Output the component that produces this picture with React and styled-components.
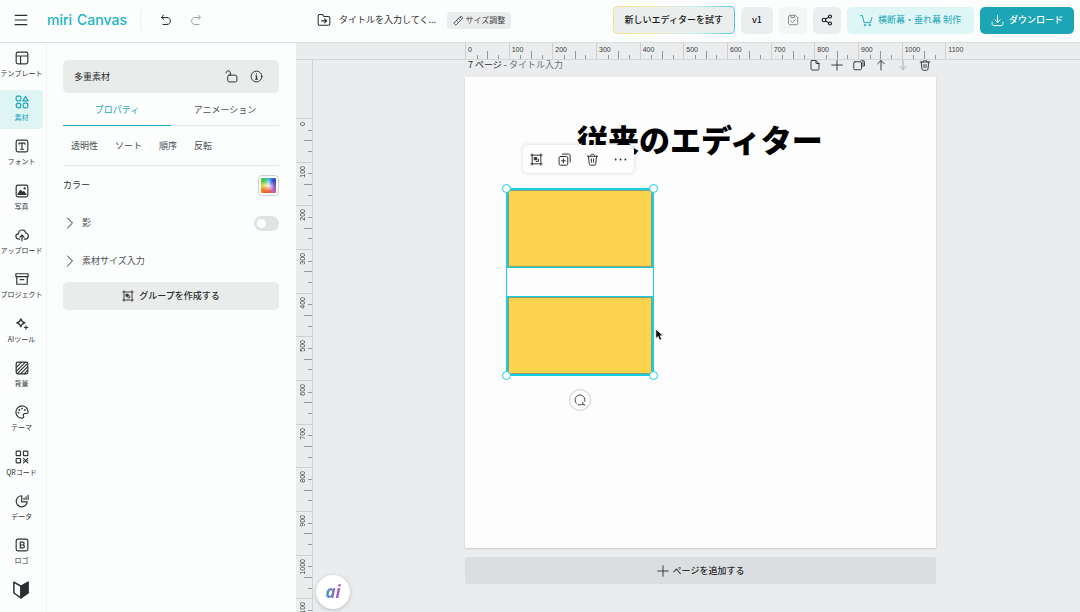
import React, { useState } from 'react';
import styled, { createGlobalStyle, ThemeProvider } from 'styled-components';

const theme = {
  teal: '#1ba5b5',
  cyan: '#16cfe3',
  text: '#2a2d2f',
  muted: '#4b4f52',
  surface: '#fcfdfd',
  soft: '#e9eceb',
  canvas: '#ebecee',
  line: '#e4e6e7'
};

const range = n => Array.from({ length: n }, (_, i) => i);

/* ---------- icons ---------- */

const Svg = styled.svg`
  display: block;
  flex: none;
  fill: none;
  height: ${props => props.$size || 14}px;
  stroke: currentColor;
  stroke-linecap: round;
  stroke-linejoin: round;
  stroke-width: ${props => props.$stroke || 1.8};
  width: ${props => props.$size || 14}px;
`;

const shapes = {
  menu: <path d="M2 4h20M2 12h20M2 20h20" />,
  undo: <path d="M7 2 3 7l5 4M3.500 7H14c9 0 9 14 0 14H6" />,
  redo: <path d="m17 2 4 5-5 4M20.500 7H10c-9 0-9 14 0 14h8" />,
  folder: <path d="M2 5c0-1.500 1-2.500 2.500-2.500H9L12 6h7.500C21 6 22 7 22 8.500v10c0 1.500-1 2.500-2.500 2.500h-15C3 21 2 20 2 18.500zM8 13.500h8M13 10l3.500 3.500L13 17" />,
  ruler: <path d="m3 16.500 13-13c1-1 2-1 3 0l1.500 1.500c1 1 1 2 0 3l-13 13c-1 1-2 1-3 0L3 19.500c-1-1-1-2 0-3zM8 12l3 3M12 8l2 2M15.500 5l2 2" />,
  save: (
    <>
      <path d="M3 5c0-1.500 1-2.500 2.500-2.500H17L21.500 7v12c0 1.500-1 2.500-2.500 2.500H5.500C4 21.500 3 20.500 3 19zM7.500 3v4H15V3" />
      <path d="m8 14 3 3 5.500-5.500" />
    </>
  ),
  share: (
    <>
      <circle cx="6" cy="12" r="3.600" />
      <circle cx="18" cy="5" r="3" />
      <circle cx="18" cy="19" r="3" />
      <path d="m9 10 6.500-3.500M9 14l6.500 3.500" />
    </>
  ),
  cart: (
    <>
      <path d="M1 3h3.500l3 13h12L22 6.500" />
      <circle cx="9" cy="20.500" r="1.300" />
      <circle cx="18" cy="20.500" r="1.300" />
    </>
  ),
  download: <path d="M12 2v13M7 10.500l5 5 5-5M2 15v3c0 2 1 3.500 3.500 3.500h13c2.500 0 3.500-1.500 3.500-3.500v-3" />,
  template: <path d="M5 2h14c2 0 3 1 3 3v14c0 2-1 3-3 3H5c-2 0-3-1-3-3V5c0-2 1-3 3-3zM2 8.500h20M9.500 8.500V22" />,
  elements: (
    <>
      <rect x="2" y="2" width="8" height="8" rx="2" />
      <path d="M18 2.500 22.500 10h-9z" />
      <circle cx="6" cy="18" r="4" />
      <rect x="14" y="14" width="8" height="8" rx="2" />
    </>
  ),
  text: (
    <>
      <rect x="2" y="2" width="20" height="20" rx="3" />
      <path d="M7 9V7h10v2M12 7v10M9.500 17.500h5" />
    </>
  ),
  photo: (
    <>
      <rect x="2" y="2" width="20" height="20" rx="3" />
      <path d="m5 18 4.500-7 3.500 4 2-2 4 5z" fill="currentColor" />
      <circle cx="16.500" cy="7.500" r="1" fill="currentColor" />
    </>
  ),
  upload: <path d="M8 19H6C0 18 0 10 6 10c0-8 11-9 12.500-1.500C25 10 24 19 17.500 19H16M12 22V12M8.500 15.500 12 12l3.500 3.500" />,
  archive: <path d="M1.500 3h21v5h-21zM3 8v13h18V8M9 13h6" />,
  sparkle: (
    <>
      <path d="M10 3c1 4.500 2.500 6 7 7-4.500 1-6 2.500-7 7-1-4.500-2.500-6-7-7 4.500-1 6-2.500 7-7z" />
      <path d="M19 15v6M16 18h6" />
    </>
  ),
  stripes: (
    <>
      <rect x="2" y="2" width="20" height="20" rx="3" />
      <path d="M2.500 11 11 2.500M2.500 17.500l15-15M4 21.500 21.500 4M10 21.500 21.500 10M16 21.500l5.500-5.500" />
    </>
  ),
  palette: (
    <>
      <path d="M22.500 12C22 5.500 17.500 1.500 12 1.500S1.500 6 1.500 12 6 22.500 12 22.500c3 0 3.500-2 2.500-4s0-4 2.500-4h3c1.500 0 2.500-1 2.500-2.500z" />
      <path d="M6 13v.1M7.500 8.500v.1M12 6v.1M17 8.500v.1" strokeWidth="3" />
    </>
  ),
  qr: (
    <>
      <rect x="2" y="2" width="7.500" height="7.500" rx="1" />
      <rect x="14.500" y="2" width="7.500" height="7.500" rx="1" />
      <rect x="2" y="14.500" width="7.500" height="7.500" rx="1" />
      <path d="m14.500 14.500 7.500 7.500M22 14.500 14.500 22M14.500 18v.1M22 18v.1" />
    </>
  ),
  data: (
    <>
      <path d="M11.500 3A9.500 9.500 0 1 0 21 13.500h-9.500z" />
      <path d="M15.500 9.500V7M19 9.500V5M22.500 9.500V2" />
    </>
  ),
  brand: (
    <>
      <rect x="2" y="2" width="20" height="20" rx="3" />
      <path d="M9 7h4c3.500 0 3.500 5 0 5H9zm0 5h4.500c3.500 0 3.500 5 0 5H9z" />
    </>
  ),
  beginner: (
    <>
      <path d="M2.500 1.500 12 7v15.500L2.500 16z" />
      <path d="M12 7l9.500-5.500V16L12 22.500z" fill="currentColor" />
    </>
  ),
  unlock: <path d="M7.500 9.500h12c1.500 0 2.500 1 2.500 2.500v7.500c0 1.500-1 2.500-2.500 2.500h-12C6 22 5 21 5 19.500V12c0-1.500 1-2.500 2.500-2.500zM2 5.500c0-5.500 8-5.500 8 0v4" />,
  info: (
    <>
      <circle cx="12" cy="12" r="10" />
      <path d="M12 7v.1M11 11h1v6M10.500 17h3" strokeWidth="2.200" />
    </>
  ),
  chevron: <path d="m7 2 10 10L7 22" />,
  group: (
    <>
      <path d="M4 1.500v21M20 1.500v21M1.500 4h21M1.500 20h21" />
      <path d="M8.500 8.500h4v4h-4z" fill="currentColor" />
      <path d="M15.500 11.500v4h-4" />
    </>
  ),
  duplicate: <path d="M4.500 6.500h11c1.500 0 2.500 1 2.500 2.500v11c0 1.500-1 2.500-2.500 2.500h-11C3 22.500 2 21.500 2 20V9c0-1.500 1-2.500 2.500-2.500zM8 2h11.500C21.500 2 22.500 3 22.500 5v11.500M10 11v7M6.500 14.500h7" />,
  trash: <path d="M2.500 6h19M8 6c0-5.500 8-5.500 8 0M4.500 6l1.500 14c.2 1.500 1 2.500 2.500 2.500h7c1.500 0 2.300-1 2.500-2.500L19.500 6M10 11v6M14 11v6" />,
  more: <path d="M3 12h.1M12 12h.1M21 12h.1" strokeWidth="3.400" />,
  note: <path d="M6 3h8l6 6v10.500c0 1.500-1 2.500-2.500 2.500h-11C5 22 4 21 4 19.500V5c0-1.200.8-2 2-2zM14 3v6h6" />,
  plus: <path d="M12 1.500v21M1.500 12h21" />,
  copy: <path d="M4 5.500h10.500c1.500 0 2.500 1 2.500 2.500v11c0 1.500-1 2.500-2.500 2.500H4c-1.500 0-2.500-1-2.500-2.500V8C1.500 6.500 2.500 5.500 4 5.500zM16 2.500c3 0 4 1 4 4v9M20 2.500c2 0 3 1 3 4v7" />,
  up: <path d="M12 22V3M5.500 9.500 12 3l6.500 6.500" />,
  down: <path d="M12 2v19M5.500 14.500 12 21l6.500-6.500" />,
  rotate: <path d="M4.500 18.500A10 10 0 1 1 21.500 15M8 21.200c3 1.200 6 .8 8.500-.7M21.500 21.500h-4V17" />
};

const Icon = ({ name, size, stroke }) => (
  <Svg viewBox="0 0 24 24" $size={size} $stroke={stroke} aria-hidden="true">
    {shapes[name]}
  </Svg>
);

/* ---------- header ---------- */

const Header = () => (
  <TopBar>
    <Brand>
      <IconButton aria-label="メニュー"><Icon name="menu" size={14} stroke={2} /></IconButton>
      <Logo href="#"><span>miri</span><span>Canvas</span></Logo>
      <Separator />
      <History>
        <IconButton aria-label="元に戻す"><Icon name="undo" size={12} stroke={2} /></IconButton>
        <IconButton aria-label="やり直す" $faded><Icon name="redo" size={12} stroke={2} /></IconButton>
      </History>
    </Brand>
    <DocInfo>
      <Icon name="folder" size={14} />
      <DocTitle aria-label="タイトル" defaultValue="タイトルを入力してく..." />
      <SizeChip><Icon name="ruler" size={11} />サイズ調整</SizeChip>
    </DocInfo>
    <Actions>
      <TryButton>新しいエディターを試す</TryButton>
      <VersionButton>v1</VersionButton>
      <BarButton $disabled aria-label="保存"><Icon name="save" size={12} /></BarButton>
      <BarButton aria-label="共有"><Icon name="share" size={12} stroke={2.2} /></BarButton>
      <PrintButton><Icon name="cart" size={13} />横断幕・垂れ幕 制作</PrintButton>
      <DownloadButton><Icon name="download" size={13} />ダウンロード</DownloadButton>
    </Actions>
  </TopBar>
);

const TopBar = styled.header`
  align-items: center;
  background: ${props => props.theme.surface};
  border-bottom: 1px solid #dcdedf;
  display: flex;
  height: 43px;
  padding: 0 6px 2px 0;
`;

const Brand = styled.div`
  align-items: center;
  display: flex;
  flex: none;
  padding-left: 14px;
  width: 317px;
`;

const IconButton = styled.button`
  color: ${props => (props.$faded ? '#a3a6a8' : props.theme.text)};
  display: grid;
  place-items: center;
`;

const Logo = styled.a`
  color: #20b3c3;
  display: flex;
  font: 500 14px/20px Inter, sans-serif;
  gap: 5px;
  margin-left: 19px;
  width: 84px;
`;

const Separator = styled.i`
  background: #eff1f1;
  height: 20px;
  margin: 0 19px 0 9px;
  width: 1px;
`;

const History = styled.div`
  display: flex;
  gap: 18px;
`;

const DocInfo = styled.div`
  align-items: center;
  display: flex;
  flex: none;
  gap: 8px;
`;

const DocTitle = styled.input`
  background: none;
  border: 0;
  color: ${props => props.theme.text};
  font: inherit;
  outline: 0;
  padding: 0;
  width: 100px;
`;

const SizeChip = styled.button`
  align-items: center;
  background: #ebeced;
  border-radius: 4px;
  color: #3c4043;
  display: flex;
  font-size: 8px;
  gap: 2px;
  height: 17px;
  justify-content: center;
  width: 64px;
`;

const Actions = styled.div`
  align-items: center;
  display: flex;
  flex: none;
  gap: 6px;
  margin-left: auto;
`;

const BarButton = styled.button`
  align-items: center;
  background: ${props => (props.$disabled ? '#f5f7f7' : '#ebedee')};
  border-radius: 5px;
  color: ${props => (props.$disabled ? '#7b7f82' : '#17191a')};
  display: flex;
  gap: 5px;
  height: 27px;
  justify-content: center;
  min-width: 28px;
  padding: 0 8px;
`;

const VersionButton = styled(BarButton)`
  font-weight: 500;
  padding: 0 11px;
`;

const TryButton = styled(BarButton)`
  background: linear-gradient(#ebeeed, #ebeeed) padding-box,
    linear-gradient(90deg, #f8e37c, #eee9bd 40%, #bff0f3 70%, #4fc4d6) border-box;
  border: 1px solid transparent;
  font-weight: 500;
  height: 28px;
  padding: 0 11px;
`;

const PrintButton = styled(BarButton)`
  background: #def6f5;
  color: ${props => props.theme.teal};
  padding: 0 13px;
`;

const DownloadButton = styled(BarButton)`
  background: ${props => props.theme.teal};
  color: #fff;
  font-weight: 500;
  padding: 0 11px;
`;

/* ---------- left rail ---------- */

const railItems = [
  ['template', 'テンプレート'],
  ['elements', '素材'],
  ['text', 'フォント'],
  ['photo', '写真'],
  ['upload', 'アップロード'],
  ['archive', 'プロジェクト'],
  ['sparkle', 'AIツール'],
  ['stripes', '背景'],
  ['palette', 'テーマ'],
  ['qr', 'QRコード'],
  ['data', 'データ'],
  ['brand', 'ロゴ']
];

const Rail = () => (
  <RailNav>
    <RailList>
      {railItems.map(([icon, label]) => (
        <RailButton key={icon} $active={icon === 'elements'}>
          <Icon name={icon} size={14} stroke={2} />
          {label}
        </RailButton>
      ))}
    </RailList>
    <Guide aria-label="ガイド"><Icon name="beginner" size={18} stroke={2} /></Guide>
  </RailNav>
);

const RailNav = styled.nav`
  background: ${props => props.theme.surface};
  border-right: 1px solid #f1f3f3;
  display: flex;
  flex: none;
  flex-direction: column;
  width: 47px;
`;

const RailList = styled.div`
  align-items: center;
  display: grid;
  flex: 1;
  grid-auto-rows: 1fr;
`;

const RailButton = styled.button`
  align-items: center;
  background: ${props => (props.$active ? '#def5f4' : 'none')};
  border-radius: 0 4px 4px 0;
  color: ${props => (props.$active ? props.theme.teal : '#303336')};
  display: flex;
  flex-direction: column;
  font-size: 7px;
  gap: 3px;
  height: 39px;
  line-height: 10px;
  padding-top: 5px;
  white-space: nowrap;
  width: 43px;
`;

const Guide = styled.button`
  align-self: flex-start;
  color: #2c2f31;
  display: grid;
  height: 37px;
  padding: 6px 0 0 12px;
  place-items: start;
`;

/* ---------- property panel ---------- */

const Panel = () => {
  const [shadow, setShadow] = useState(false);

  return (
    <Side>
      <PanelHead>
        <h2>多重素材</h2>
        <IconButton aria-label="ロック"><Icon name="unlock" size={13} /></IconButton>
        <IconButton aria-label="情報"><Icon name="info" size={13} /></IconButton>
      </PanelHead>
      <Tabs role="tablist">
        <Tab role="tab" aria-selected="true" $active>プロパティ</Tab>
        <Tab role="tab" aria-selected="false">アニメーション</Tab>
      </Tabs>
      <Tools>
        {['透明性', 'ソート', '順序', '反転'].map(label => (
          <button key={label}>{label}</button>
        ))}
      </Tools>
      <Row>
        <Grow>カラー</Grow>
        <Swatch aria-label="カラー" />
      </Row>
      <Row>
        <Icon name="chevron" size={12} stroke={2} />
        <Grow as="label" htmlFor="shadow" $muted>影</Grow>
        <Toggle
          id="shadow"
          type="checkbox"
          checked={shadow}
          onChange={e => setShadow(e.target.checked)}
        />
      </Row>
      <Row as="button">
        <Icon name="chevron" size={12} stroke={2} />
        <Grow $muted>素材サイズ入力</Grow>
      </Row>
      <GroupButton><Icon name="group" size={12} />グループを作成する</GroupButton>
    </Side>
  );
};

const Side = styled.aside`
  background: ${props => props.theme.surface};
  display: flex;
  flex: none;
  flex-direction: column;
  padding: 17px 17px 0 16px;
  width: 249px;
`;

const PanelHead = styled.div`
  align-items: center;
  background: #e8ecea;
  border-radius: 5px;
  display: flex;
  gap: 12px;
  height: 33px;
  padding: 0 16px 0 11px;

  h2 {
    flex: 1;
    font-size: 9px;
    font-weight: 400;
    margin: 0;
  }
`;

const Tabs = styled.div`
  display: grid;
  grid-template-columns: 1fr 1fr;
`;

const Tab = styled.button`
  box-shadow: inset 0 -1px ${props => (props.$active ? '#12afc0' : props.theme.line)};
  color: ${props => (props.$active ? props.theme.teal : props.theme.muted)};
  height: 33px;
`;

const Tools = styled.div`
  border-bottom: 1px solid ${props => props.theme.line};
  display: flex;
  gap: 17px;
  height: 40px;
  padding-left: 8px;

  button {
    color: ${props => props.theme.muted};
  }
`;

const Row = styled.div`
  align-items: center;
  display: flex;
  gap: 6px;
  height: 38px;
  text-align: left;
  width: 100%;

  svg {
    margin-left: 1px;
  }
`;

const Grow = styled.span`
  color: ${props => (props.$muted ? props.theme.muted : props.theme.text)};
  flex: 1;
`;

const Swatch = styled.button`
  background: radial-gradient(rgba(255, 255, 255, 0.9), transparent 60%) content-box,
    conic-gradient(#3fbfe8, #2f49c4 45deg, #7a55c0 90deg, #c05fc0 135deg, #ee5a2a 180deg,
      #f57a22 225deg, #d8dc3a 270deg, #4cc640 315deg, #3fbfe8) content-box;
  border: 1px solid #cfd2d4;
  border-radius: 4px;
  height: 21px;
  padding: 2px;
  width: 21px;
`;

const Toggle = styled.input`
  appearance: none;
  background: ${props => (props.checked ? props.theme.teal : '#dfe3e4')};
  border-radius: 8px;
  display: flex;
  height: 15px;
  justify-content: ${props => (props.checked ? 'flex-end' : 'flex-start')};
  margin: 0;
  padding: 3px;
  width: 25px;

  &::before {
    background: #fff;
    border-radius: 50%;
    content: '';
    height: 9px;
    width: 9px;
  }
`;

const GroupButton = styled.button`
  align-items: center;
  background: ${props => props.theme.soft};
  border-radius: 5px;
  display: flex;
  flex: none;
  font-weight: 500;
  gap: 5px;
  height: 28px;
  justify-content: center;
  margin-top: 2px;
`;

/* ---------- rulers ---------- */

const Ruler = ({ vertical }) => {
  const Track = vertical ? ColumnTrack : RowTrack;
  const Cell = vertical ? ColumnCell : RowCell;

  return (
    <Track>
      {range(12).map(i => (
        <Cell key={i}>
          <span>{i * 100}</span>
          <i />
          <i />
          <i />
        </Cell>
      ))}
    </Track>
  );
};

const RulerBar = styled.div`
  border-bottom: 1px solid #d3d6d8;
  height: 17px;
  overflow: hidden;
  padding-left: 25px;
`;

const RulerOrigin = styled.div`
  height: 100%;
  margin: 0 auto;
  width: 471px;
`;

const RowTrack = styled.div`
  display: grid;
  grid-template-columns: repeat(12, 1fr);
  height: 100%;
  width: 524px;
`;

const ColumnTrack = styled.div`
  display: grid;
  grid-template-rows: repeat(12, 1fr);
  height: 524px;
`;

const Cell = styled.div`
  color: #3d4042;
  display: grid;
  font: 7px/8px 'Liberation Sans', sans-serif;

  i {
    border: 0 solid #94989a;
  }
`;

const RowCell = styled(Cell)`
  align-items: end;
  border-left: 1px solid #cdd0d2;
  grid-template-columns: repeat(4, minmax(0, 1fr));

  span {
    align-self: start;
    grid-area: 1 / 1 / 2 / -1;
    padding: 3px 0 0 2px;
  }

  i {
    border-left-width: 1px;
    grid-row: 1;
    height: 4px;
  }

  i:nth-of-type(1) { grid-column: 2; }
  i:nth-of-type(2) { grid-column: 3; height: 8px; }
  i:nth-of-type(3) { grid-column: 4; }

  &:last-child i {
    display: none;
  }

  &:last-child {
    grid-template-columns: 1fr;
  }
`;

const ColumnCell = styled(Cell)`
  border-top: 1px solid #cdd0d2;
  grid-template-rows: repeat(4, minmax(0, 1fr));
  justify-items: end;

  span {
    align-self: start;
    grid-area: 1 / 1 / -1 / 2;
    justify-self: start;
    margin-left: 3px;
    padding-bottom: 3px;
    transform: rotate(180deg);
    writing-mode: vertical-rl;
  }

  i {
    border-top-width: 1px;
    grid-column: 1;
    width: 4px;
  }

  i:nth-of-type(1) { grid-row: 2; }
  i:nth-of-type(2) { grid-row: 3; width: 8px; }
  i:nth-of-type(3) { grid-row: 4; }
`;

const SideRuler = styled.div`
  border-right: 1px solid #cfd2d4;
  flex: none;
  overflow: hidden;
  padding-top: 58px;
  width: 17px;
`;

/* ---------- canvas ---------- */

const Workspace = () => (
  <Stage>
    <RulerBar>
      <RulerOrigin><Ruler /></RulerOrigin>
    </RulerBar>
    <StageBody>
      <SideRuler><Ruler vertical /></SideRuler>
      <Scroller>
        <PageColumn>
          <PageHead>
            <PageName>7 ページ - <span>タイトル入力</span></PageName>
            <PageTools>
              {['note', 'plus', 'copy', 'up', 'down', 'trash'].map(name => (
                <IconButton key={name} aria-label={name} $faded={name === 'down'}>
                  <Icon name={name} size={12} />
                </IconButton>
              ))}
            </PageTools>
          </PageHead>
          <Page>
            <Headline>従来のエディター</Headline>
            <Selection>
              <Block />
              <Block />
              {['nw', 'ne', 'sw', 'se'].map(corner => <Handle key={corner} $corner={corner} />)}
            </Selection>
            <FloatBar>
              <IconButton aria-label="グループ"><Icon name="group" size={13} /></IconButton>
              <IconButton aria-label="複製"><Icon name="duplicate" size={13} /></IconButton>
              <IconButton aria-label="削除"><Icon name="trash" size={13} /></IconButton>
              <IconButton aria-label="その他"><Icon name="more" size={13} /></IconButton>
            </FloatBar>
            <RotateButton aria-label="回転"><Icon name="rotate" size={12} /></RotateButton>
            <Pointer viewBox="0 0 12 18">
              <path d="M1 1v13l3-3 2 5 3-1-2-5h4z" fill="#111" stroke="#fff" />
            </Pointer>
          </Page>
          <AddPage><Icon name="plus" size={12} />ページを追加する</AddPage>
        </PageColumn>
        <AiButton aria-label="AI">
          <span>ai</span>
        </AiButton>
      </Scroller>
    </StageBody>
  </Stage>
);

const Stage = styled.main`
  background: ${props => props.theme.canvas};
  display: flex;
  flex: 1;
  flex-direction: column;
  min-width: 0;
`;

const StageBody = styled.div`
  display: flex;
  flex: 1;
  min-height: 0;
`;

const Scroller = styled.div`
  flex: 1;
  min-width: 0;
  overflow: hidden;
  padding-left: 8px;
  position: relative;
`;

const PageColumn = styled.div`
  margin: 0 auto;
  width: 471px;
`;

const PageHead = styled.div`
  align-items: center;
  display: flex;
  height: 17px;
  justify-content: space-between;
  padding: 0 5px 7px 3px;
`;

const PageName = styled.div`
  line-height: 10px;

  span {
    color: #6c7073;
  }
`;

const PageTools = styled.div`
  display: flex;
  gap: 10px;
`;

const Page = styled.section`
  aspect-ratio: 1;
  background: #fdfdfd;
  box-shadow: 0 1px 2px rgba(0, 0, 0, 0.15);
  position: relative;
`;

const Headline = styled.h1`
  color: #000;
  font-size: 31px;
  font-weight: 900;
  left: 112px;
  line-height: 36px;
  margin: 0;
  position: absolute;
  top: 44px;
  white-space: nowrap;
`;

const Selection = styled.div`
  border: 1px solid ${props => props.theme.cyan};
  display: flex;
  flex-direction: column;
  height: 188px;
  justify-content: space-between;
  left: 41px;
  position: absolute;
  top: 111px;
  width: 148px;
`;

const Block = styled.div`
  background: #fcd34d;
  border: 1px solid ${props => props.theme.cyan};
  box-shadow: inset 0 0 0 1px #8f9a78;
  height: 79px;
`;

const Handle = styled.i`
  background: #fff;
  border: 1px solid ${props => props.theme.cyan};
  border-radius: 50%;
  height: 9px;
  position: absolute;
  width: 9px;
  ${props => (props.$corner[0] === 'n' ? 'top' : 'bottom')}: -5px;
  ${props => (props.$corner[1] === 'w' ? 'left' : 'right')}: -5px;
`;

const FloatBar = styled.div`
  align-items: center;
  background: #fdfdfd;
  border-radius: 5px;
  box-shadow: 0 0 5px rgba(0, 0, 0, 0.14);
  display: flex;
  gap: 15px;
  height: 28px;
  left: 58px;
  padding: 0 7px;
  position: absolute;
  top: 68px;
`;

const RotateButton = styled.button`
  background: #fff;
  border-radius: 50%;
  box-shadow: 0 0 2px rgba(0, 0, 0, 0.5);
  display: grid;
  height: 20px;
  left: 105px;
  place-items: center;
  position: absolute;
  top: 313px;
  width: 20px;
`;

const Pointer = styled.svg`
  height: 14px;
  left: 190px;
  position: absolute;
  top: 251px;
  width: 9px;
`;

const AddPage = styled.button`
  align-items: center;
  background: #dbdee0;
  border-radius: 2px;
  display: flex;
  font-weight: 500;
  gap: 4px;
  height: 27px;
  justify-content: center;
  margin-top: 9px;
  width: 100%;
`;

const AiButton = styled.button`
  background: #fff;
  border-radius: 50%;
  bottom: 3px;
  box-shadow: 0 1px 4px rgba(0, 0, 0, 0.2);
  height: 34px;
  left: 3px;
  position: absolute;
  width: 34px;

  span {
    background: linear-gradient(90deg, #1fb6d0, #7a6fc0 50%, #d04fc0);
    background-clip: text;
    color: transparent;
    font: italic 700 17px/24px 'Open Sans', sans-serif;
    padding: 0 2px;
  }
`;

/* ---------- app ---------- */

const GlobalStyle = createGlobalStyle`
  *, *::before, *::after {
    box-sizing: border-box;
  }

  body {
    color: #2a2d2f;
    font: 9px/14px 'Noto Sans CJK JP', sans-serif;
    margin: 0;
  }

  button {
    background: none;
    border: 0;
    color: inherit;
    cursor: pointer;
    font: inherit;
    padding: 0;
    white-space: nowrap;
  }

  a {
    text-decoration: none;
  }
`;

const Shell = styled.div`
  display: flex;
  flex-direction: column;
  height: 100vh;
`;

const Body = styled.div`
  display: flex;
  flex: 1;
  min-height: 0;
`;

const App = () => (
  <ThemeProvider theme={theme}>
    <GlobalStyle />
    <Shell>
      <Header />
      <Body>
        <Rail />
        <Panel />
        <Workspace />
      </Body>
    </Shell>
  </ThemeProvider>
);

export default App;
